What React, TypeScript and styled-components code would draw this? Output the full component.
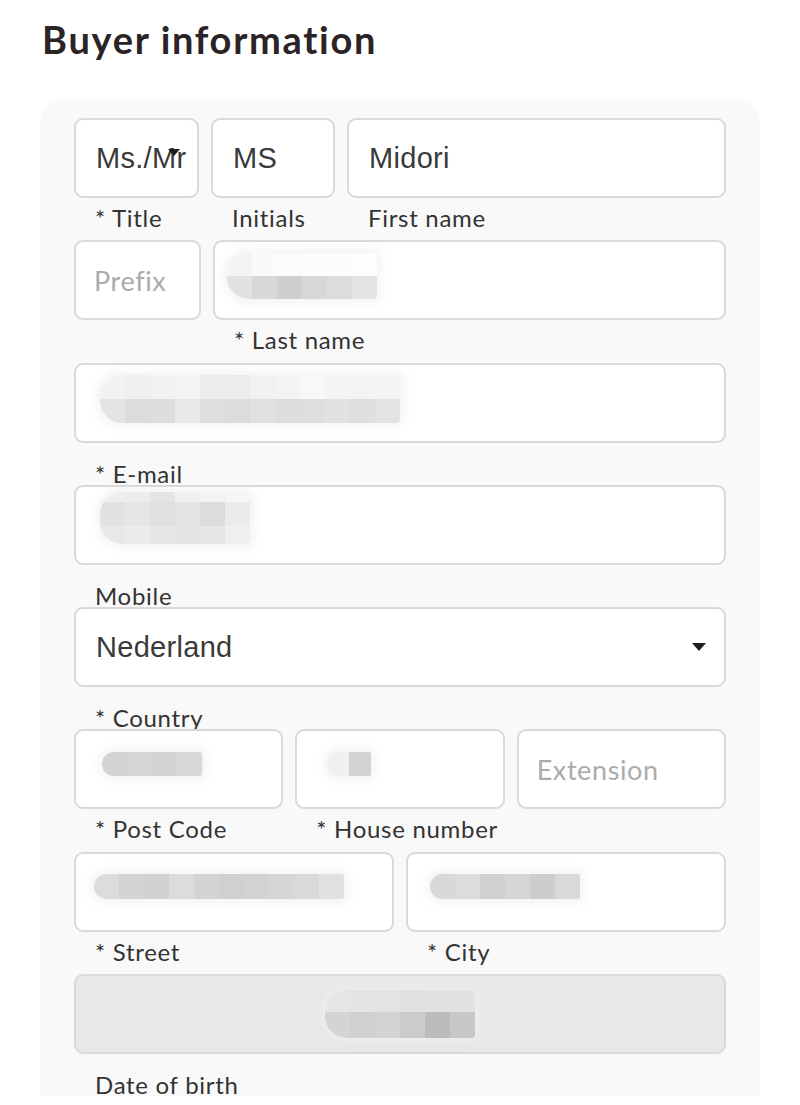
import React from "react";
import styled, { createGlobalStyle } from "styled-components";

const Global = createGlobalStyle`
  html, body { margin: 0; padding: 0; background: #ffffff; }
  body { font-family: "Lato", "Liberation Sans", sans-serif; color: #333; }
`;

const Page = styled.div`
  width: 800px;
  padding: 14px 0 0 0;
  box-sizing: border-box;
`;

const Heading = styled.h1`
  margin: 0 0 0 42px;
  font-family: "Lato", sans-serif;
  font-weight: 700;
  font-size: 38px;
  letter-spacing: 1.7px;
  line-height: 50px;
  color: #2b2325;
`;

const Panel = styled.div`
  margin: 36px 0 0 40px;
  width: 720px;
  padding: 18px 34px 0 34px;
  box-sizing: border-box;
  background: #f9f9f9;
  border-radius: 22px 22px 0 0;
  display: flex;
  flex-direction: column;
`;

const Row = styled.div`
  display: flex;
  gap: 12px;
`;

const FieldCol = styled.div<{ $w?: number }>`
  display: flex;
  flex-direction: column;
  ${(p) => (p.$w ? `width: ${p.$w}px; flex: none;` : `flex: 1; min-width: 0;`)}
`;

const Box = styled.div<{ $disabled?: boolean; $center?: boolean }>`
  position: relative;
  height: 80px;
  box-sizing: border-box;
  border: 2px solid #d9d9d9;
  border-radius: 9px;
  background: ${(p) => (p.$disabled ? "#e8e8e8" : "#ffffff")};
  display: flex;
  align-items: center;
  justify-content: ${(p) => (p.$center ? "center" : "flex-start")};
  padding: 0 20px;
  overflow: hidden;
`;

const Value = styled.span`
  font-family: "Liberation Sans", Arial, sans-serif;
  font-size: 29px;
  letter-spacing: 0.3px;
  color: #3a3a3a;
  white-space: nowrap;
`;

const Placeholder = styled.span`
  font-family: "Lato", sans-serif;
  font-size: 27px;
  color: #ababab;
  letter-spacing: 0.6px;
  margin-left: -2px;
  white-space: nowrap;
`;

const Label = styled.div<{ $low?: boolean; $indent?: number }>`
  height: 42.3px;
  box-sizing: border-box;
  padding-top: ${(p) => (p.$low ? 18 : 7)}px;
  padding-left: ${(p) => p.$indent ?? 21}px;
  font-family: "Lato", sans-serif;
  font-size: 24px;
  line-height: 26px;
  letter-spacing: 0.7px;
  color: #333;
  white-space: nowrap;
`;

const Arrow = styled.span<{ $right: number; $top?: number; $size?: number }>`
  position: absolute;
  right: ${(p) => p.$right}px;
  top: ${(p) => p.$top ?? 34}px;
  width: 0;
  height: 0;
  border-left: ${(p) => (p.$size ?? 14) / 2}px solid transparent;
  border-right: ${(p) => (p.$size ?? 14) / 2}px solid transparent;
  border-top: ${(p) => ((p.$size ?? 14) * 0.6).toFixed(1)}px solid #1e1e1e;
`;

const BlurWrap = styled.div<{ $ml: number; $mt: number }>`
  display: flex;
  flex-direction: column;
  margin-left: ${(p) => p.$ml}px;
  margin-top: ${(p) => p.$mt}px;
  border-radius: 22px 4px 4px 22px;
  overflow: hidden;
  box-shadow: 0 0 8px 4px rgba(240, 240, 240, 0.7);
`;

const BlurRow = styled.div`
  display: flex;
`;

const Cell = styled.div<{ $c: string; $w: number; $h: number }>`
  width: ${(p) => p.$w}px;
  height: ${(p) => p.$h}px;
  background: ${(p) => p.$c};
`;

type BlurProps = { rows: string[][]; cw: number; rh: number[]; ml?: number; mt?: number };
const Blur = ({ rows, cw, rh, ml = 0, mt = 0 }: BlurProps) => (
  <BlurWrap $ml={ml} $mt={mt}>
    {rows.map((r, i) => (
      <BlurRow key={i}>
        {r.map((c, j) => (
          <Cell key={j} $c={c} $w={cw} $h={rh[i]} />
        ))}
      </BlurRow>
    ))}
  </BlurWrap>
);

export default function App() {
  return (
    <>
      <Global />
      <Page>
        <Heading>Buyer information</Heading>
        <Panel>
          <Row>
            <FieldCol $w={125}>
              <Box>
                <Value>Ms./Mr</Value>
                <Arrow $right={17} $top={29} $size={12} />
              </Box>
              <Label>* Title</Label>
            </FieldCol>
            <FieldCol $w={124}>
              <Box>
                <Value>MS</Value>
              </Box>
              <Label>Initials</Label>
            </FieldCol>
            <FieldCol>
              <Box>
                <Value>Midori</Value>
              </Box>
              <Label>First name</Label>
            </FieldCol>
          </Row>
          <Row>
            <FieldCol $w={127}>
              <Box>
                <Placeholder>Prefix</Placeholder>
              </Box>
              <Label />
            </FieldCol>
            <FieldCol>
              <Box>
                <Blur
                  ml={-8}
                  mt={-8}
                  cw={25}
                  rh={[23, 23]}
                  rows={[
                    ["#f4f4f4", "#fafafa", "#fbfbfb", "#fcfcfc", "#fcfcfc", "#fdfdfd"],
                    ["#e2e2e2", "#d8d8d8", "#cfcfcf", "#d7d7d7", "#dcdcdc", "#e4e4e4"],
                  ]}
                />
              </Box>
              <Label>* Last name</Label>
            </FieldCol>
          </Row>
          <Row>
            <FieldCol>
              <Box>
                <Blur
                  ml={4}
                  mt={-8}
                  cw={25}
                  rh={[24, 24]}
                  rows={[
                    ["#f2f2f2", "#efefef", "#f1f1f1", "#f4f4f4", "#ededed", "#ececec", "#f1f1f1", "#f3f3f3", "#f8f8f8", "#f4f4f4", "#f3f3f3", "#f5f5f5"],
                    ["#e4e4e4", "#dcdcdc", "#dddddd", "#e8e8e8", "#dedede", "#dcdcdc", "#e0e0e0", "#dddddd", "#dedede", "#e2e2e2", "#dfdfdf", "#e3e3e3"],
                  ]}
                />
              </Box>
              <Label $low>* E-mail</Label>
            </FieldCol>
          </Row>
          <Row>
            <FieldCol>
              <Box>
                <Blur
                  ml={4}
                  mt={-14}
                  cw={25}
                  rh={[10, 24, 18]}
                  rows={[
                    ["#efefef", "#ececec", "#e4e4e4", "#f0f0f0", "#f4f4f4", "#f6f6f6"],
                    ["#e2e2e2", "#e6e6e6", "#e0e0e0", "#e4e4e4", "#dcdcdc", "#ebebeb"],
                    ["#e8e8e8", "#ebebeb", "#e7e7e7", "#e3e3e3", "#e6e6e6", "#efefef"],
                  ]}
                />
              </Box>
              <Label $low>Mobile</Label>
            </FieldCol>
          </Row>
          <Row>
            <FieldCol>
              <Box>
                <Value>Nederland</Value>
                <Arrow $right={18} $top={34} $size={14} />
              </Box>
              <Label $low>* Country</Label>
            </FieldCol>
          </Row>
          <Row>
            <FieldCol>
              <Box>
                <Blur
                  ml={6}
                  mt={-10}
                  cw={25}
                  rh={[24]}
                  rows={[["#d2d2d2", "#d5d5d5", "#d4d4d4", "#d8d8d8"]]}
                />
              </Box>
              <Label>* Post Code</Label>
            </FieldCol>
            <FieldCol>
              <Box>
                <Blur
                  ml={10}
                  mt={-10}
                  cw={22}
                  rh={[24]}
                  rows={[["#f0f0f0", "#d2d2d2"]]}
                />
              </Box>
              <Label>* House number</Label>
            </FieldCol>
            <FieldCol>
              <Box>
                <Placeholder>Extension</Placeholder>
              </Box>
              <Label />
            </FieldCol>
          </Row>
          <Row>
            <FieldCol>
              <Box>
                <Blur
                  ml={-2}
                  mt={-10}
                  cw={25}
                  rh={[25]}
                  rows={[["#dcdcdc", "#d4d4d4", "#d1d1d1", "#dcdcdc", "#d4d4d4", "#d0d0d0", "#d2d2d2", "#d6d6d6", "#d9d9d9", "#e1e1e1"]]}
                />
              </Box>
              <Label>* Street</Label>
            </FieldCol>
            <FieldCol>
              <Box>
                <Blur
                  ml={2}
                  mt={-10}
                  cw={25}
                  rh={[25]}
                  rows={[["#d8d8d8", "#dcdcdc", "#d0d0d0", "#d6d6d6", "#cdcdcd", "#d9d9d9"]]}
                />
              </Box>
              <Label $indent={21}>* City</Label>
            </FieldCol>
          </Row>
          <Row>
            <FieldCol>
              <Box $disabled $center>
                <Blur
                  ml={0}
                  mt={0}
                  cw={25}
                  rh={[22, 26]}
                  rows={[
                    ["#e6e6e6", "#e4e4e4", "#e3e3e3", "#e0e0e0", "#e1e1e1", "#e2e2e2"],
                    ["#d4d4d4", "#d0d0d0", "#d3d3d3", "#cccccc", "#bcbcbc", "#c8c8c8"],
                  ]}
                />
              </Box>
              <Label $low>Date of birth</Label>
            </FieldCol>
          </Row>
        </Panel>
      </Page>
    </>
  );
}
